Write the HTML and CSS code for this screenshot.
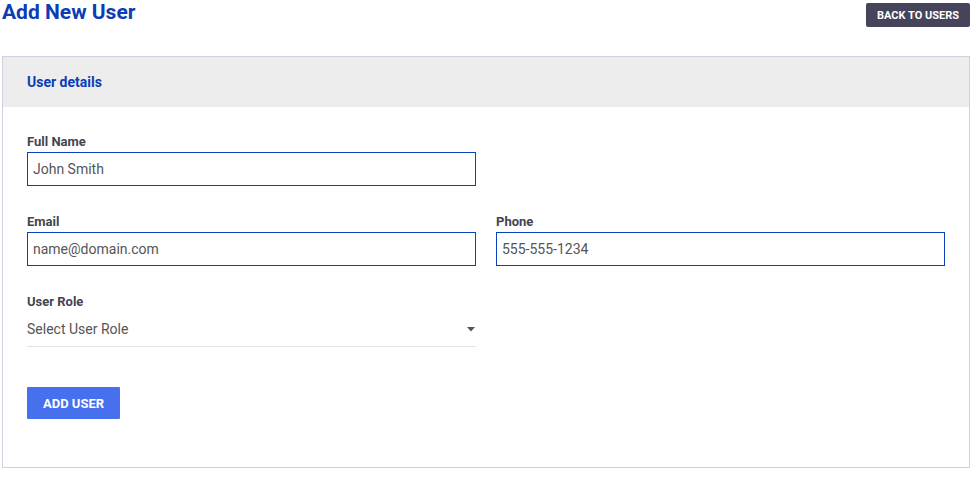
FILE: index.html
```html
<!DOCTYPE html>
<html lang="en">
<head>
<meta charset="utf-8">
<title>Add New User</title>
<link rel="stylesheet" href="styles.css">
</head>
<body>
<div class="page">
  <div class="topbar">
    <h1 class="title">Add New User</h1>
    <button class="btn-back" type="button">BACK TO USERS</button>
  </div>
  <div class="card">
    <div class="card-header">User details</div>
    <form class="card-body">
      <div class="grid">
        <div class="field">
          <label class="label">Full Name</label>
          <div class="input">John Smith</div>
        </div>
        <div></div>
        <div class="field">
          <label class="label">Email</label>
          <div class="input">name@domain.com</div>
        </div>
        <div class="field">
          <label class="label">Phone</label>
          <div class="input">555-555-1234</div>
        </div>
        <div class="field">
          <label class="label">User Role</label>
          <div class="select">
            <span>Select User Role</span>
            <svg class="caret" width="8" height="5" viewBox="0 0 8 5"><path d="M0 0H8L4 4.5Z" fill="#555"/></svg>
          </div>
        </div>
      </div>
      <button class="btn-add" type="button">ADD USER</button>
    </form>
  </div>
</div>
</body>
</html>
```
FILE: styles.css
```css
* { box-sizing: border-box; }
html, body { margin: 0; padding: 0; background: #fff; }
body { font-family: Roboto, "Liberation Sans", Arial, sans-serif; }
.page { padding: 0 6px 0 2px; }
.topbar {
  display: flex;
  justify-content: space-between;
  align-items: flex-start;
  height: 56px;
}
.title {
  margin: 0;
  font-size: 21px;
  line-height: 25px;
  font-weight: 700;
  color: #0b3db5;
}
.btn-back {
  margin-top: 3px;
  height: 24px;
  width: 104px;
  padding: 0;
  border: none;
  border-radius: 2px;
  background: #45445a;
  color: #fff;
  font-family: inherit;
  font-size: 11px;
  font-weight: 700;
}
.card {
  border: 1px solid #d2d0e0;
}
.card-header {
  height: 50px;
  background: #ededed;
  display: flex;
  align-items: center;
  padding: 0 24px;
  font-size: 14px;
  font-weight: 700;
  color: #0b3db5;
}
.card-body {
  padding: 27px 24px 48px 24px;
  margin: 0;
}
.grid {
  display: grid;
  grid-template-columns: 1fr 1fr;
  column-gap: 20px;
  row-gap: 28px;
}
.label {
  display: block;
  font-size: 13px;
  line-height: 16px;
  font-weight: 700;
  color: #444450;
  margin-bottom: 2px;
}
.input {
  height: 34px;
  border: 1px solid #0b40bd;
  padding: 0 5px;
  display: flex;
  align-items: center;
  font-size: 14px;
  color: #555;
}
.select {
  height: 35px;
  border-bottom: 1px solid #e2e2e2;
  display: flex;
  align-items: center;
  justify-content: space-between;
  font-size: 14px;
  color: #555;
  padding-right: 1px;
}
.caret { display: block; margin-top: 1px; }
.btn-add {
  margin-top: 40px;
  display: block;
  width: 93px;
  height: 32px;
  padding: 0;
  border: none;
  border-radius: 1px;
  background: #4670ee;
  color: #fff;
  font-family: inherit;
  font-size: 13px;
  font-weight: 700;
}
```
